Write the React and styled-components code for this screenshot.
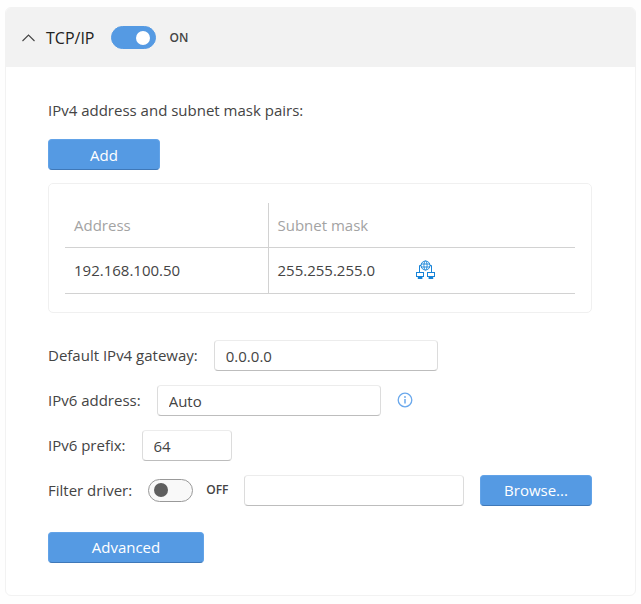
import React, { useState } from "react";
import styled, { createGlobalStyle } from "styled-components";

const GlobalStyle = createGlobalStyle`
  * {
    box-sizing: border-box;
  }
  body {
    margin: 0;
    background: #fefefe;
    color: #444;
    font-family: "Segoe UI", "Open Sans", "Noto Sans", sans-serif;
    font-size: 15px;
    line-height: 20px;
  }
`;

const Card = styled.section`
  margin: 7px 5px 8px;
  border: 1px solid #f2f2f2;
  border-radius: 6px;
  background: #fff;
  overflow: hidden;
`;

const Header = styled.header`
  display: flex;
  align-items: center;
  height: 59px;
  padding-left: 14px;
  background: #f2f2f2;
`;

const CollapseButton = styled.button`
  display: flex;
  width: 16px;
  height: 16px;
  padding: 0;
  border: none;
  background: none;
  color: #444;
  cursor: pointer;
`;

const Title = styled.h2`
  margin: 0 17px 0 10px;
  color: #222;
  font-size: 16px;
  font-weight: 500;
`;

const SwitchLabel = styled.label`
  display: flex;
  align-items: center;
  gap: 13px;
  font-size: 12px;
  font-weight: 600;
  cursor: pointer;
`;

const SwitchInput = styled.input`
  appearance: none;
  display: flex;
  align-items: center;
  width: 45px;
  height: 23px;
  margin: 0;
  padding: 0 5px;
  border: 1px solid #999;
  border-radius: 12px;
  background: #f9f9f9;
  cursor: pointer;

  &::before {
    content: "";
    width: 14px;
    height: 14px;
    border-radius: 50%;
    background: #5f5f5f;
  }
  &:checked {
    justify-content: flex-end;
    border-color: #559ae3;
    background: #559ae3;
  }
  &:checked::before {
    background: #fff;
  }
`;

const Body = styled.div`
  display: flex;
  flex-direction: column;
  align-items: flex-start;
  padding: 33px 43px 32px 42px;
`;

const Caption = styled.p`
  margin: 0 0 19px;
`;

const Button = styled.button`
  flex: none;
  width: ${(props) => (props.$wide ? "156px" : "112px")};
  height: 31px;
  padding: 0;
  border: 1px solid #62a3e8;
  border-bottom-color: #3f78b8;
  border-radius: 4px;
  background: #559ae3;
  color: #fff;
  font: inherit;
  cursor: pointer;
`;

const TablePanel = styled.div`
  width: 100%;
  margin: 13px 0 27px;
  padding: 19px 16px 18px;
  border: 1px solid #f0f0f0;
  border-radius: 5px;
`;

const Table = styled.table`
  width: 100%;
  border-collapse: collapse;
  table-layout: fixed;

  th,
  td {
    height: 46px;
    padding: 0 9px;
    border-bottom: 1px solid #d2d2d2;
    text-align: left;
    font-weight: 400;
  }
  th {
    height: 44px;
    color: #a3a3a3;
  }
  th:first-child,
  td:first-child {
    width: 203px;
    border-right: 1px solid #d2d2d2;
  }
`;

const MaskCell = styled.div`
  display: flex;
  align-items: center;
  gap: 40px;
`;

const IconButton = styled.button`
  display: flex;
  padding: 0;
  border: none;
  background: none;
  color: #1683d8;
  cursor: pointer;
`;

const Form = styled.form`
  display: flex;
  flex-direction: column;
  gap: 14px;
  width: 100%;
`;

const Row = styled.div`
  display: flex;
  align-items: center;
  gap: 16px;
`;

const Field = styled.input`
  width: ${(props) => props.$width || "auto"};
  flex: ${(props) => (props.$width ? "none" : "1")};
  min-width: 0;
  height: 31px;
  padding: 2px 11px 0;
  border: 1px solid #ececec;
  border-right-color: #dcdcdc;
  border-bottom-color: #bdbdbd;
  border-left-color: #dcdcdc;
  border-radius: 4px;
  background: #fff;
  color: #444;
  font: inherit;
`;

const Footer = styled.div`
  margin-top: 26px;
`;

const ChevronIcon = () => (
  <svg width="16" height="16" viewBox="0 0 16 16" fill="none">
    <path d="M2.5 11L8.5 5L14.5 11" stroke="currentColor" strokeWidth="1.1" />
  </svg>
);

const NetworkIcon = () => (
  <svg width="20" height="20" viewBox="0 0 20 20" fill="none">
    <g stroke="currentColor">
      <circle cx="10.5" cy="5.5" r="4.5" />
      <path d="M6 4H15M6 7H15" strokeWidth="0.9" />
      <ellipse cx="10.5" cy="5.5" rx="1.6" ry="4.5" strokeWidth="0.9" />
      <path d="M6 5.5H4.5V13M15 5.5H16.5V13" />
      <rect x="1.5" y="12.5" width="7" height="4" />
      <rect x="12.5" y="12.5" width="7" height="4" />
    </g>
    <path
      d="M1 16H9V17H7.4V19H2.8V17H1ZM12 16H20V17H18.2V19H13.6V17H12Z"
      fill="currentColor"
    />
  </svg>
);

const InfoIcon = () => (
  <svg width="16" height="16" viewBox="0 0 16 16" fill="none">
    <circle cx="8" cy="8" r="6.8" stroke="#6aa8ec" strokeWidth="1.3" />
    <path d="M8 7V11.5" stroke="#6aa8ec" strokeWidth="1.5" />
    <circle cx="8" cy="5" r="0.9" fill="#6aa8ec" />
  </svg>
);

const Switch = ({ label, checked, onChange }) => (
  <SwitchLabel>
    <SwitchInput
      type="checkbox"
      role="switch"
      aria-label={label}
      checked={checked}
      onChange={(e) => onChange(e.target.checked)}
    />
    {checked ? "ON" : "OFF"}
  </SwitchLabel>
);

const pairs = [{ address: "192.168.100.50", mask: "255.255.255.0" }];

const App = () => {
  const [enabled, setEnabled] = useState(true);
  const [filter, setFilter] = useState(false);
  const [open, setOpen] = useState(true);

  return (
    <>
      <GlobalStyle />
      <Card>
        <Header>
          <CollapseButton
            type="button"
            aria-label="Toggle section"
            aria-expanded={open}
            onClick={() => setOpen(!open)}
          >
            <ChevronIcon />
          </CollapseButton>
          <Title>TCP/IP</Title>
          <Switch label="TCP/IP" checked={enabled} onChange={setEnabled} />
        </Header>
        {open && (
          <Body>
            <Caption>IPv4 address and subnet mask pairs:</Caption>
            <Button type="button">Add</Button>
            <TablePanel>
              <Table>
                <thead>
                  <tr>
                    <th>Address</th>
                    <th>Subnet mask</th>
                  </tr>
                </thead>
                <tbody>
                  {pairs.map((pair) => (
                    <tr key={pair.address}>
                      <td>{pair.address}</td>
                      <td>
                        <MaskCell>
                          {pair.mask}
                          <IconButton type="button" aria-label="Network">
                            <NetworkIcon />
                          </IconButton>
                        </MaskCell>
                      </td>
                    </tr>
                  ))}
                </tbody>
              </Table>
            </TablePanel>
            <Form onSubmit={(e) => e.preventDefault()}>
              <Row>
                <label htmlFor="gateway">Default IPv4 gateway:</label>
                <Field id="gateway" $width="224px" defaultValue="0.0.0.0" />
              </Row>
              <Row>
                <label htmlFor="ipv6">IPv6 address:</label>
                <Field id="ipv6" $width="224px" defaultValue="Auto" />
                <InfoIcon />
              </Row>
              <Row>
                <label htmlFor="prefix">IPv6 prefix:</label>
                <Field id="prefix" $width="90px" defaultValue="64" />
              </Row>
              <Row>
                <label htmlFor="driver">Filter driver:</label>
                <Switch
                  label="Enable filter driver"
                  checked={filter}
                  onChange={setFilter}
                />
                <Field id="driver" />
                <Button type="button">Browse...</Button>
              </Row>
            </Form>
            <Footer>
              <Button type="button" $wide>
                Advanced
              </Button>
            </Footer>
          </Body>
        )}
      </Card>
    </>
  );
};

export default App;
